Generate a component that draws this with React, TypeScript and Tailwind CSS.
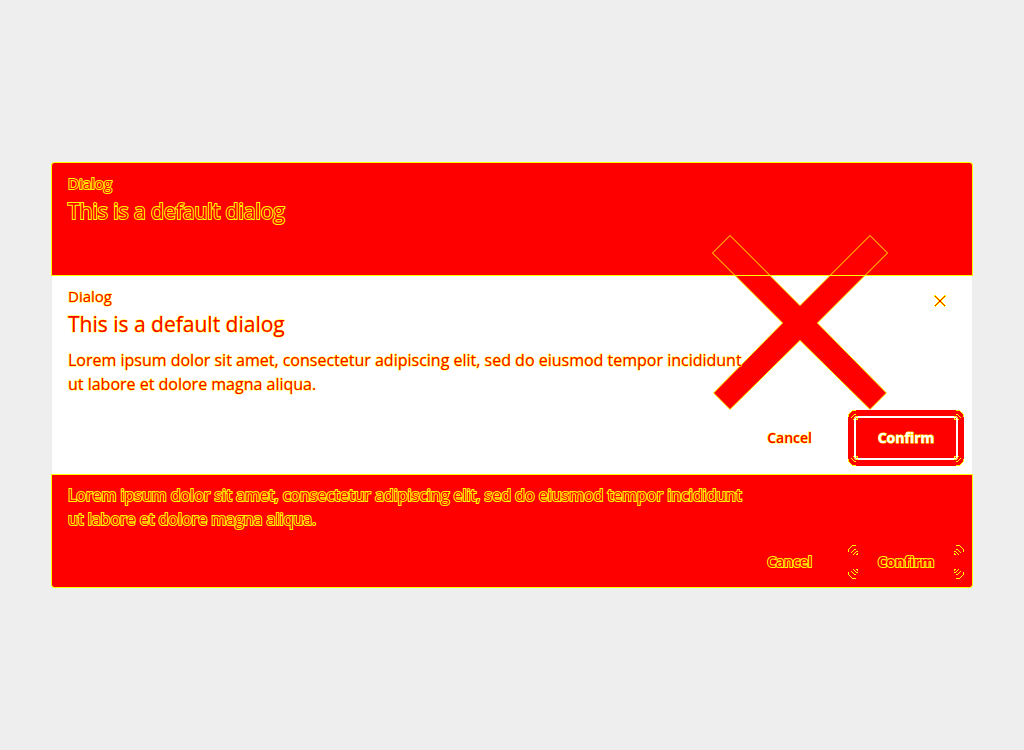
const outlined =
  "text-[#ff0000] [-webkit-text-stroke:1px_#ffff00] [paint-order:stroke_fill]";
const onRed =
  "text-[#ff0000] [-webkit-text-stroke:2px_#ffff00] [paint-order:stroke_fill]";

function Cross() {
  return (
    <svg
      aria-hidden="true"
      className="pointer-events-none absolute right-[83px] top-[72px] h-[176px] w-[177px]"
      viewBox="0 0 177 176"
      fill="#ff0000"
      stroke="#ffff00"
    >
      <path d="M18 .5L88 70.5L158 .5L175.500 18L105.500 88L174.500 158L158 174.500L88 105.500L18 174.500L1.500 158L70.500 88L.500 18Z" />
      <path d="M23 40.500H153" shapeRendering="crispEdges" />
    </svg>
  );
}

function CornerMarks() {
  return (
    <svg
      aria-hidden="true"
      className="h-[11px] w-[11px]"
      viewBox="0 0 11 11"
      fill="none"
      stroke="#ffff00"
      shapeRendering="crispEdges"
    >
      <path d="M0 6.500H1M.500 6V4M1 3.500H2M2 2.500H3M3 1.500H4M4 .500H8" />
      <path d="M3 7.500H4M4 6.500H5M5 5.500H6M6 4.500H8M5 9.500H6M6 8.500H7M7 7.500H8M8 6.500H10M8 9.500H10M9 8.500H10" />
    </svg>
  );
}

function Corners() {
  return (
    <span aria-hidden="true" className="absolute inset-0 flex flex-col justify-between">
      <span className="flex justify-between">
        <CornerMarks />
        <span className="-scale-x-100">
          <CornerMarks />
        </span>
      </span>
      <span className="flex -scale-y-100 justify-between">
        <CornerMarks />
        <span className="-scale-x-100">
          <CornerMarks />
        </span>
      </span>
    </span>
  );
}

export default function App() {
  return (
    <main className="flex min-h-screen flex-col justify-center bg-[#eeeeee] px-[52px] font-['Open_Sans',sans-serif]">
      <section
        role="dialog"
        aria-label="This is a default dialog"
        className="relative flex flex-col rounded-[2px] bg-white"
      >
        <header className="min-h-28 rounded-t-[2px] bg-[#ff0000] px-4 pt-[10px] outline outline-1 outline-[#ffff00]">
          <p className={"text-[15px] leading-5 " + onRed}>Dialog</p>
          <h1 className={"mt-1 text-[21px] leading-7 " + onRed}>This is a default dialog</h1>
        </header>

        <Cross />

        <div className="relative flex min-h-[200px] flex-col pt-[11px]">
          <div className="flex items-start justify-between pl-4 pr-[26px]">
            <div>
              <p className={"text-[15px] leading-5 " + outlined}>Dialog</p>
              <h2 className={"mt-1 text-[21px] leading-7 " + outlined}>
                This is a default dialog
              </h2>
            </div>
            <button type="button" aria-label="Close" className="mt-[9px] h-3 w-3">
              <svg viewBox="0 0 12 12" className="h-3 w-3" fill="none" shapeRendering="crispEdges">
                <path d="M.500 .500L11.500 11.500M11.500 .500L.500 11.500" stroke="#ffff00" strokeWidth="2" />
                <path d="M1 1L11 11M11 1L1 11" stroke="#ff0000" />
              </svg>
            </button>
          </div>
          <p className={"mt-[10px] max-w-[712px] px-4 text-base leading-6 " + outlined}>
            Lorem ipsum dolor sit amet, consectetur adipiscing elit, sed do eiusmod tempor
            incididunt ut labore et dolore magna aliqua.
          </p>
          <div className="mt-auto flex items-center justify-end pb-[9px] pr-2">
            <button type="button" className={"h-14 px-9 text-sm font-semibold leading-5 " + outlined}>
              Cancel
            </button>
            <button
              type="button"
              className="relative h-14 w-[116px] rounded-lg bg-[#ff0000] p-[6px]"
            >
              <span className="flex h-full items-center justify-center rounded-[3px] border-2 border-white text-sm font-bold leading-5 text-white [-webkit-text-stroke:1px_#ffff00] [paint-order:stroke_fill]">
                Confirm
              </span>
              <Corners />
            </button>
          </div>
        </div>

        <footer className="flex min-h-28 flex-col justify-between rounded-b-[2px] bg-[#ff0000] pb-2 pt-2 outline outline-1 outline-[#ffff00]">
          <p className={"max-w-[712px] px-4 text-base leading-6 " + onRed}>
            Lorem ipsum dolor sit amet, consectetur adipiscing elit, sed do eiusmod tempor
            incididunt ut labore et dolore magna aliqua.
          </p>
          <div className="flex items-center justify-end pr-2">
            <button type="button" className={"h-[34px] px-9 text-sm font-semibold leading-5 " + onRed}>
              Cancel
            </button>
            <button
              type="button"
              className={"relative h-[34px] w-[116px] text-sm font-bold leading-5 " + onRed}
            >
              Confirm
              <Corners />
            </button>
          </div>
        </footer>
      </section>
    </main>
  );
}
